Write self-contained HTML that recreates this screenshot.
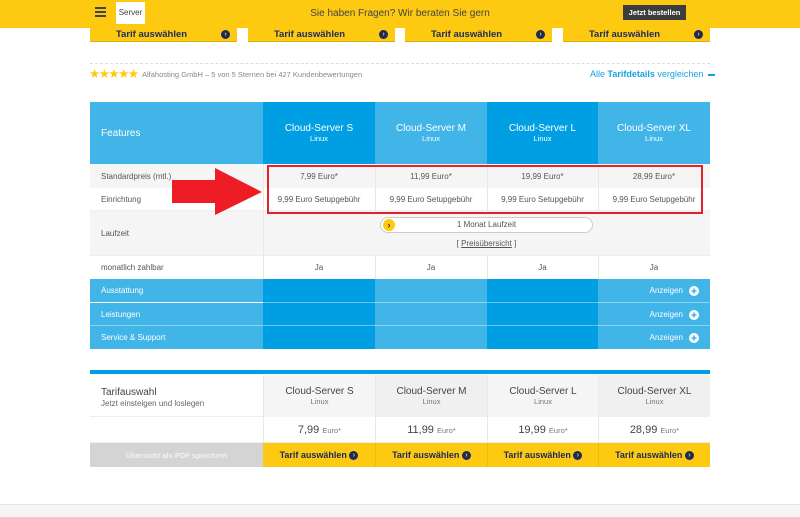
<!DOCTYPE html>
<html><head><meta charset="utf-8"><style>
*{margin:0;padding:0;box-sizing:border-box}
body{width:800px;height:517px;overflow:hidden;background:#fff;font-family:"Liberation Sans",sans-serif;position:relative;color:#555}
.abs{position:absolute}
.top{left:0;top:0;width:800px;height:28px;background:#fdc911}
.tbtn{top:28px;height:14px;background:#fdc911;border-bottom:1px solid #d9b00f;font-size:9.5px;font-weight:bold;color:#1e2a5a;line-height:13px}
.tbtn span.t{position:absolute;left:0;width:147px;text-align:center;left:-12px}
.tbtn .dot{position:absolute;right:7px;top:2px}
.dot{display:inline-block;width:9px;height:9px;border-radius:50%;background:#1e2a5a;color:#fdc911;font-size:7px;line-height:9px;text-align:center;vertical-align:middle}
.cell{position:absolute;display:flex;align-items:center;justify-content:center;font-size:8px;color:#555}
.fl{justify-content:flex-start;padding-left:11px}
.dk{background:#009fe3}.lt{background:#41b4e8}
.w{color:#fff}
.plus{margin-left:6px}
.by{font-size:9px;color:#1e2a5a;font-weight:bold}
</style></head><body>
<div class="abs top"></div>
<div class="abs" style="left:95px;top:7px;width:11px;height:2px;background:#444;box-shadow:0 4px 0 #444,0 8px 0 #444"></div>
<div class="abs" style="left:116px;top:2px;width:29px;height:22px;background:#fff;font-size:8px;color:#444;text-align:center;line-height:22px">Server</div>
<div class="abs" style="left:300px;top:8px;width:200px;text-align:center;font-size:10px;color:#444">Sie haben Fragen? Wir beraten Sie gern</div>
<div class="abs" style="left:623px;top:5px;width:63px;height:15px;background:#3d3d3d;color:#fff;font-size:7.5px;font-weight:bold;text-align:center;line-height:15px">Jetzt bestellen</div>
<div class="abs tbtn" style="left:90px;width:147px"><span class="t">Tarif auswählen</span><span class="dot">›</span></div>
<div class="abs tbtn" style="left:248px;width:147px"><span class="t">Tarif auswählen</span><span class="dot">›</span></div>
<div class="abs tbtn" style="left:405px;width:147px"><span class="t">Tarif auswählen</span><span class="dot">›</span></div>
<div class="abs tbtn" style="left:563px;width:147px"><span class="t">Tarif auswählen</span><span class="dot">›</span></div>
<div class="abs" style="left:90px;top:63px;width:620px;border-top:1px dashed #ddd"></div>
<div class="abs" style="left:89px;top:66px;font-size:12.5px;color:#fdc911;letter-spacing:-1.5px">★★★★★</div>
<div class="abs" style="left:142px;top:70px;font-size:7.5px;color:#888">Alfahosting GmbH – 5 von 5 Sternen bei 427 Kundenbewertungen</div>
<div class="abs" style="left:590px;top:69px;width:120px;font-size:9px;color:#1aa1e0;white-space:nowrap">Alle <b>Tarifdetails</b> vergleichen <span style="display:inline-block;width:7px;height:2px;background:#1aa1e0;vertical-align:middle;margin-left:2px"></span></div>

<div class="cell fl lt w" style="left:90px;top:102px;width:173px;height:62px;font-size:10px">Features</div>
<div class="cell dk w" style="left:263px;top:102px;width:112px;height:62px;flex-direction:column;font-size:10px">Cloud-Server S<span style="font-size:7.5px">Linux</span></div>
<div class="cell lt w" style="left:375px;top:102px;width:112px;height:62px;flex-direction:column;font-size:10px">Cloud-Server M<span style="font-size:7.5px">Linux</span></div>
<div class="cell dk w" style="left:487px;top:102px;width:111px;height:62px;flex-direction:column;font-size:10px">Cloud-Server L<span style="font-size:7.5px">Linux</span></div>
<div class="cell lt w" style="left:598px;top:102px;width:112px;height:62px;flex-direction:column;font-size:10px">Cloud-Server XL<span style="font-size:7.5px">Linux</span></div>

<div class="abs" style="left:90px;top:164px;width:620px;height:24px;background:#f5f5f5"></div>
<div class="abs" style="left:90px;top:188px;width:620px;height:23px;background:#fff;border-bottom:1px solid #eee"></div>
<div class="abs" style="left:90px;top:211px;width:620px;height:45px;background:#f5f5f5;border-bottom:1px solid #eee"></div>
<div class="abs" style="left:90px;top:256px;width:620px;height:23px;background:#fff"></div>
<div class="abs" style="left:263px;top:164px;width:1px;height:115px;background:#e8e8e8"></div>
<div class="abs" style="left:375px;top:164px;width:1px;height:47px;background:#e8e8e8"></div>
<div class="abs" style="left:487px;top:164px;width:1px;height:47px;background:#e8e8e8"></div>
<div class="abs" style="left:598px;top:164px;width:1px;height:47px;background:#e8e8e8"></div>
<div class="abs" style="left:375px;top:256px;width:1px;height:23px;background:#e8e8e8"></div>
<div class="abs" style="left:487px;top:256px;width:1px;height:23px;background:#e8e8e8"></div>
<div class="abs" style="left:598px;top:256px;width:1px;height:23px;background:#e8e8e8"></div>

<div class="cell fl" style="left:90px;top:164px;width:173px;height:24px">Standardpreis (mtl.)</div>
<div class="cell fl" style="left:90px;top:188px;width:173px;height:23px">Einrichtung</div>
<div class="cell fl" style="left:90px;top:211px;width:173px;height:45px">Laufzeit</div>
<div class="cell fl" style="left:90px;top:256px;width:173px;height:23px">monatlich zahlbar</div>

<div class="cell" style="left:263px;top:164px;width:112px;height:24px">7,99 Euro*</div>
<div class="cell" style="left:375px;top:164px;width:112px;height:24px">11,99 Euro*</div>
<div class="cell" style="left:487px;top:164px;width:111px;height:24px">19,99 Euro*</div>
<div class="cell" style="left:598px;top:164px;width:112px;height:24px">28,99 Euro*</div>
<div class="cell" style="left:263px;top:188px;width:112px;height:23px">9,99 Euro Setupgebühr</div>
<div class="cell" style="left:375px;top:188px;width:112px;height:23px">9,99 Euro Setupgebühr</div>
<div class="cell" style="left:487px;top:188px;width:111px;height:23px">9,99 Euro Setupgebühr</div>
<div class="cell" style="left:598px;top:188px;width:112px;height:23px">9,99 Euro Setupgebühr</div>
<div class="cell" style="left:263px;top:256px;width:112px;height:23px">Ja</div>
<div class="cell" style="left:375px;top:256px;width:112px;height:23px">Ja</div>
<div class="cell" style="left:487px;top:256px;width:111px;height:23px">Ja</div>
<div class="cell" style="left:598px;top:256px;width:112px;height:23px">Ja</div>

<div class="abs" style="left:380px;top:217px;width:213px;height:16px;border:1px solid #ccc;border-radius:8px;background:#fff;font-size:8px;text-align:center;line-height:14px">1 Monat Laufzeit</div>
<div class="abs" style="left:383px;top:219px;width:12px;height:12px;border-radius:50%;background:#fdc911;font-size:9px;font-weight:bold;color:#333;text-align:center;line-height:12px">›</div>
<div class="abs" style="left:380px;top:239px;width:213px;text-align:center;font-size:8px">[ <u>Preisübersicht</u> ]</div>

<div class="abs" style="left:267px;top:165px;width:436px;height:49px;border:2px solid #e4202a"></div>
<svg class="abs" style="left:170px;top:167px" width="94" height="49"><polygon points="2,13 45,13 45,1 92,25 45,48 45,36 2,36" fill="#ee1c25"/></svg>

<div class="cell fl lt w" style="left:90px;top:279px;width:173px;height:23px">Ausstattung</div>
<div class="cell fl lt w" style="left:90px;top:303px;width:173px;height:23px">Leistungen</div>
<div class="cell fl lt w" style="left:90px;top:326px;width:173px;height:23px">Service &amp; Support</div>
<div class="abs dk" style="left:263px;top:279px;width:112px;height:70px"></div>
<div class="abs lt" style="left:375px;top:279px;width:112px;height:70px"></div>
<div class="abs dk" style="left:487px;top:279px;width:111px;height:70px"></div>
<div class="abs lt" style="left:598px;top:279px;width:112px;height:70px"></div>
<div class="cell w" style="left:598px;top:279px;width:112px;height:23px;justify-content:flex-end;padding-right:11px">Anzeigen<svg class="plus" width="10" height="10"><circle cx="5" cy="5" r="5" fill="#fff"/><path d="M5 2.5v5M2.5 5h5" stroke="#41b4e8" stroke-width="1.6"/></svg></div>
<div class="cell w" style="left:598px;top:303px;width:112px;height:23px;justify-content:flex-end;padding-right:11px">Anzeigen<svg class="plus" width="10" height="10"><circle cx="5" cy="5" r="5" fill="#fff"/><path d="M5 2.5v5M2.5 5h5" stroke="#41b4e8" stroke-width="1.6"/></svg></div>
<div class="cell w" style="left:598px;top:326px;width:112px;height:23px;justify-content:flex-end;padding-right:11px">Anzeigen<svg class="plus" width="10" height="10"><circle cx="5" cy="5" r="5" fill="#fff"/><path d="M5 2.5v5M2.5 5h5" stroke="#41b4e8" stroke-width="1.6"/></svg></div>
<div class="abs" style="left:90px;top:302px;width:620px;height:1px;background:rgba(255,255,255,0.4)"></div>
<div class="abs" style="left:90px;top:325px;width:620px;height:1px;background:rgba(255,255,255,0.4)"></div>

<div class="abs" style="left:90px;top:370px;width:620px;height:4px;background:#009fe3"></div>
<div class="abs" style="left:90px;top:375px;width:173px;height:42px;background:#fff;border-bottom:1px solid #eee"></div>
<div class="abs" style="left:101px;top:387px;font-size:10px;color:#444">Tarifauswahl</div>
<div class="abs" style="left:101px;top:399px;font-size:8px;color:#666">Jetzt einsteigen und loslegen</div>
<div class="cell" style="left:263px;top:375px;width:112px;height:42px;background:#f5f5f5;flex-direction:column;font-size:10px;color:#444;border-left:1px solid #e8e8e8">Cloud-Server S<span style="font-size:7.5px;color:#777">Linux</span></div>
<div class="cell" style="left:375px;top:375px;width:112px;height:42px;background:#f0f0f0;flex-direction:column;font-size:10px;color:#444;border-left:1px solid #e8e8e8">Cloud-Server M<span style="font-size:7.5px;color:#777">Linux</span></div>
<div class="cell" style="left:487px;top:375px;width:111px;height:42px;background:#f5f5f5;flex-direction:column;font-size:10px;color:#444;border-left:1px solid #e8e8e8">Cloud-Server L<span style="font-size:7.5px;color:#777">Linux</span></div>
<div class="cell" style="left:598px;top:375px;width:112px;height:42px;background:#f0f0f0;flex-direction:column;font-size:10px;color:#444;border-left:1px solid #e8e8e8">Cloud-Server XL<span style="font-size:7.5px;color:#777">Linux</span></div>
<div class="abs" style="left:90px;top:417px;width:620px;height:26px;border-bottom:1px solid #eee"></div>
<div class="cell" style="left:263px;top:417px;width:112px;height:26px;font-size:11px;color:#444;border-left:1px solid #e8e8e8">7,99&nbsp;<span style="font-size:7.5px;color:#777">Euro*</span></div>
<div class="cell" style="left:375px;top:417px;width:112px;height:26px;font-size:11px;color:#444;border-left:1px solid #e8e8e8">11,99&nbsp;<span style="font-size:7.5px;color:#777">Euro*</span></div>
<div class="cell" style="left:487px;top:417px;width:111px;height:26px;font-size:11px;color:#444;border-left:1px solid #e8e8e8">19,99&nbsp;<span style="font-size:7.5px;color:#777">Euro*</span></div>
<div class="cell" style="left:598px;top:417px;width:112px;height:26px;font-size:11px;color:#444;border-left:1px solid #e8e8e8">28,99&nbsp;<span style="font-size:7.5px;color:#777">Euro*</span></div>
<div class="cell" style="left:90px;top:443px;width:173px;height:24px;background:#d4d4d4;color:#f2f2f2;font-size:7.5px;font-weight:bold">Übersicht als PDF speichern</div>
<div class="cell" style="left:263px;top:443px;width:447px;height:24px;background:#fdc911"></div>
<div class="cell by" style="left:263px;top:443px;width:112px;height:24px">Tarif auswählen&nbsp;<span class="dot">›</span></div>
<div class="cell by" style="left:375px;top:443px;width:112px;height:24px;border-left:1px solid #e8c010">Tarif auswählen&nbsp;<span class="dot">›</span></div>
<div class="cell by" style="left:487px;top:443px;width:111px;height:24px;border-left:1px solid #e8c010">Tarif auswählen&nbsp;<span class="dot">›</span></div>
<div class="cell by" style="left:598px;top:443px;width:112px;height:24px;border-left:1px solid #e8c010">Tarif auswählen&nbsp;<span class="dot">›</span></div>

<div class="abs" style="left:0;top:504px;width:800px;height:13px;background:#f5f5f5;border-top:1px solid #e6e6e6"></div>
</body></html>
